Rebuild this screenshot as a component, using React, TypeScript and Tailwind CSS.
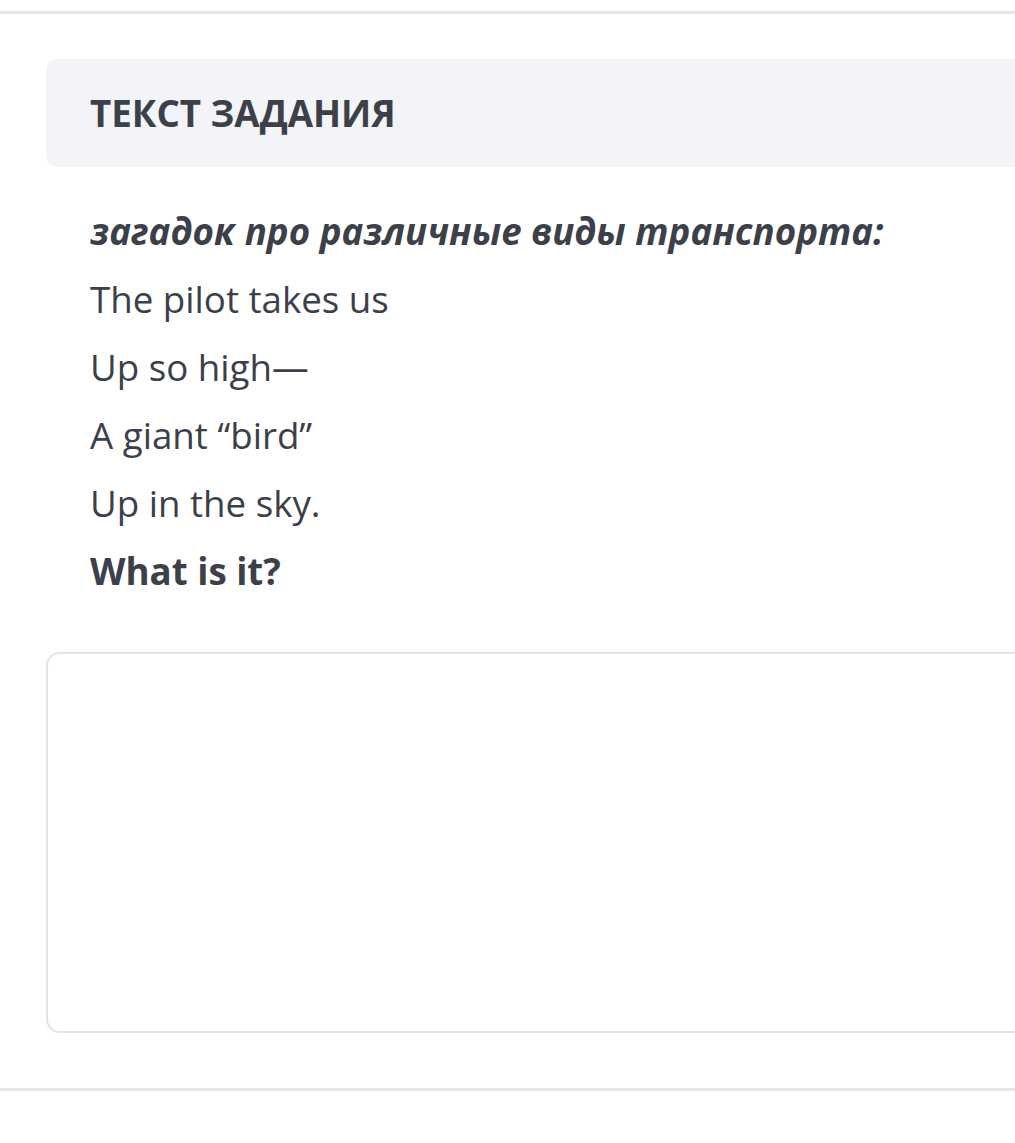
import React from "react";

export default function App() {
  return (
    <div
      className="w-[1015px] h-[1143px] overflow-hidden bg-white text-[#3b4049]"
      style={{ fontFamily: '"Open Sans", "Noto Sans", sans-serif' }}
    >
      <div className="pt-[11px]">
        <div className="h-[3px] bg-[#e6e6e6]" />
      </div>
      <div className="pl-[46px] pt-[45px]">
        <div className="-mr-8 h-[108px] rounded-[12px] bg-[#f3f4f7] pl-[44px] flex items-center">
          <h2 className="text-[36.7px] leading-[68px] font-bold">
            ТЕКСТ ЗАДАНИЯ
          </h2>
        </div>
        <div className="pl-[44px] pt-[30px] flex flex-col">
          <p className="text-[36.7px] leading-[68px] font-bold italic">
            загадок про различные виды транспорта:
          </p>
          <p className="text-[36.7px] leading-[68px]">The pilot takes us</p>
          <p className="text-[36.7px] leading-[68px]">Up so high—</p>
          <p className="text-[36.7px] leading-[68px]">A giant “bird”</p>
          <p className="text-[36.7px] leading-[68px]">Up in the sky.</p>
          <p className="text-[36.7px] leading-[68px] font-bold">What is it?</p>
        </div>
        <div className="mt-[47px] -mr-8 h-[381px] rounded-[14px] border-2 border-[#e4e4e4]" />
      </div>
      <div className="pt-[55px]">
        <div className="h-[3px] bg-[#e6e6e6]" />
      </div>
    </div>
  );
}
